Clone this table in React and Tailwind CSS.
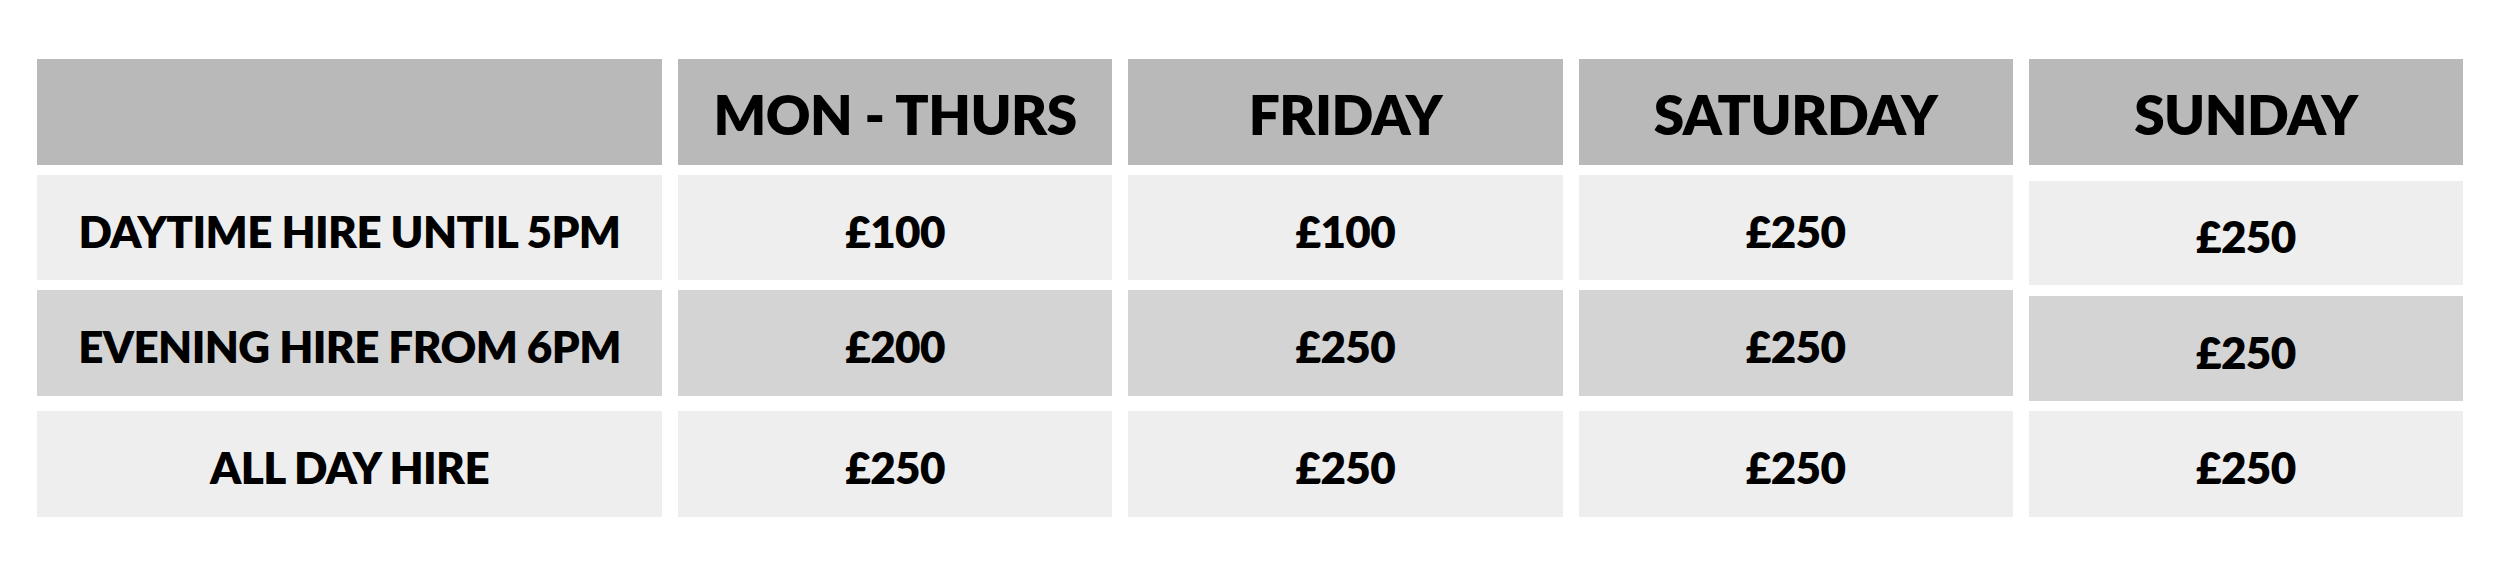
import React from "react";

const columns = [
  {
    title: "",
    body: ["DAYTIME HIRE UNTIL 5PM", "EVENING HIRE FROM 6PM", "ALL DAY HIRE"],
  },
  { title: "MON - THURS", body: ["£100", "£200", "£250"] },
  { title: "FRIDAY", body: ["£100", "£250", "£250"] },
  { title: "SATURDAY", body: ["£250", "£250", "£250"] },
  { title: "SUNDAY", body: ["£250", "£250", "£250"], shifted: true },
];

const rowBg = ["bg-[#eeeeee]", "bg-[#d4d4d4]", "bg-[#eeeeee]"];

const cell = "flex items-center justify-center pt-[6px] text-[44px] font-extrabold tracking-[-0.6px]";

const App = () => {
  return (
    <div
      className="w-[2500px] h-[577px] bg-white px-[37px] pt-[59px] text-black"
      style={{ fontFamily: "Lato, 'Liberation Sans', sans-serif" }}
    >
      <div className="flex gap-[16px]">
        {columns.map((col, i) => (
          <div
            key={i}
            className={`flex flex-col ${i === 0 ? "w-[625px]" : "flex-1"}`}
          >
            {/* header cell */}
            <div className="h-[106px] bg-[#b9b9b9] flex items-center justify-center pt-[5px] text-[55px] font-extrabold tracking-[-0.5px]">
              {col.title}
            </div>

            {/* body cells */}
            {col.shifted ? (
              <div className="flex flex-col pt-[16px]">
                <div className={`h-[104px] ${rowBg[0]} ${cell}`}>{col.body[0]}</div>
                <div className={`mt-[11px] h-[105px] ${rowBg[1]} ${cell}`}>{col.body[1]}</div>
                <div className={`mt-[10px] h-[106px] ${rowBg[2]} ${cell}`}>{col.body[2]}</div>
              </div>
            ) : (
              <div className="flex flex-col pt-[10px]">
                <div className={`h-[105px] ${rowBg[0]} ${cell}`}>{col.body[0]}</div>
                <div className={`mt-[10px] h-[106px] ${rowBg[1]} ${cell}`}>{col.body[1]}</div>
                <div className={`mt-[15px] h-[106px] ${rowBg[2]} ${cell}`}>{col.body[2]}</div>
              </div>
            )}
          </div>
        ))}
      </div>
    </div>
  );
};

export default App;
